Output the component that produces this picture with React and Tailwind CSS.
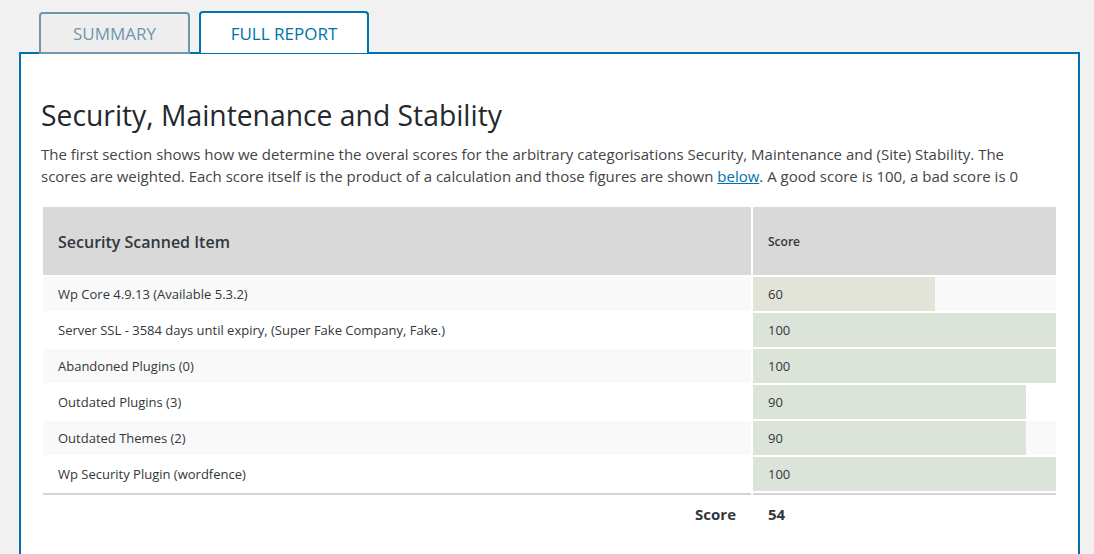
import React from "react";

const ROWS = [
  { label: "Wp Core 4.9.13 (Available 5.3.2)", score: 60 },
  { label: "Server SSL - 3584 days until expiry, (Super Fake Company, Fake.)", score: 100 },
  { label: "Abandoned Plugins (0)", score: 100 },
  { label: "Outdated Plugins (3)", score: 90 },
  { label: "Outdated Themes (2)", score: 90 },
  { label: "Wp Security Plugin (wordfence)", score: 100 },
];

export default function App() {
  return (
    <div
      className="min-h-screen bg-[#f1f1f1] pl-[19px] pt-[12px] overflow-hidden text-[#32373c]"
      style={{ fontFamily: '"Segoe UI", "Open Sans", sans-serif' }}
    >
      {/* Tabs */}
      <div className="flex gap-[9px] pl-[20px] relative z-10 -mb-[2px]">
        <button className="w-[151px] h-[42px] border-2 border-[#6e97ad] rounded-t-[4px] bg-[#eeeeee] text-[#6e97ad] text-[17px] leading-none pt-[1px]">
          SUMMARY
        </button>
        <button className="w-[170px] h-[42px] border-2 border-b-0 border-[#0073aa] rounded-t-[4px] bg-white text-[#0073aa] text-[17px] leading-none -mt-px">
          FULL REPORT
        </button>
      </div>

      {/* Panel */}
      <div className="w-[1061px] h-[520px] bg-white border-2 border-[#0073aa] px-[20px] pt-[43px]">
        <h2 className="text-[28.3px] leading-[36px] text-[#23282d] font-normal">
          Security, Maintenance and Stability
        </h2>
        <p className="mt-[10px] pr-[30px] text-[15px] leading-[22px] text-[#444]">
          The first section shows how we determine the overal scores for the arbitrary categorisations Security, Maintenance and (Site) Stability. The scores are weighted. Each score itself is the product of a calculation and those figures are shown{" "}
          <a href="#" className="text-[#0073aa] underline">below</a>. A good score is 100, a bad score is 0
        </p>

        <table className="mt-[18px] w-full border-separate border-spacing-[2px] text-[13px] text-[#32373c]">
          <thead>
            <tr className="bg-[#d9d9d9] h-[68px]">
              <th className="w-[708px] text-left font-semibold text-[16px] pl-[15px] pt-[2px]">Security Scanned Item</th>
              <th className="text-left font-semibold text-[12px] pl-[15px] pt-[2px]">Score</th>
            </tr>
          </thead>
          <tbody>
            {ROWS.map((r, i) => (
              <tr key={r.label} className={i % 2 === 0 ? "bg-[#f9f9f9]" : "bg-white"}>
                <td className="h-[34px] pl-[15px] pt-[2px]">{r.label}</td>
                <td className="h-[34px] p-0">
                  <div
                    className={`h-[34px] flex items-center pl-[15px] pt-[2px] ${r.score < 70 ? "bg-[#e3e4d8]" : "bg-[#dce3d8]"}`}
                    style={{ width: `${r.score}%` }}
                  >
                    {r.score}
                  </div>
                </td>
              </tr>
            ))}
          </tbody>
          <tfoot>
            <tr>
              <td className="border-t-2 border-[#d4d4d4] h-[40px] text-right pr-[15px] font-bold text-[15px]">Score</td>
              <td className="border-t-2 border-[#d4d4d4] h-[40px] pl-[15px] font-bold text-[15px]">54</td>
            </tr>
          </tfoot>
        </table>
      </div>
    </div>
  );
}
